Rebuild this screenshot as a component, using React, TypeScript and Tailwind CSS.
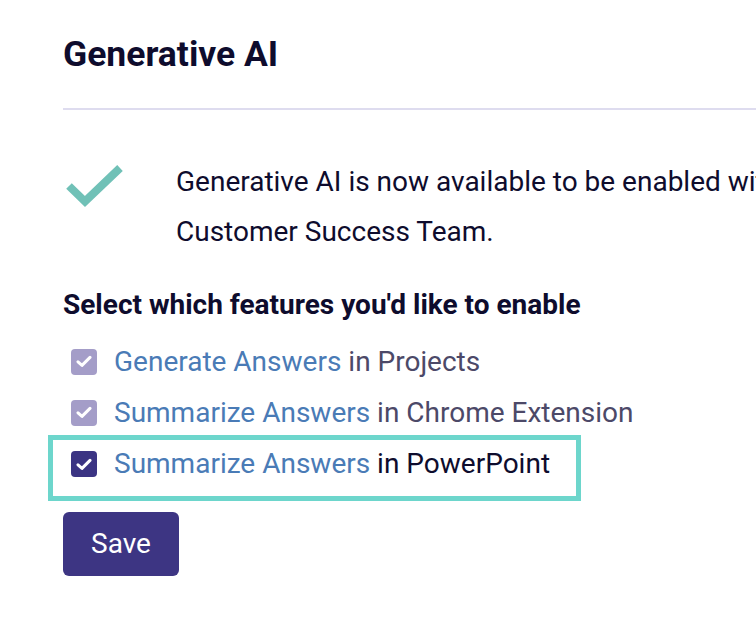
import React from "react";

function Check({ dark }: { dark?: boolean }) {
  return (
    <span
      className={
        "flex h-[26px] w-[26px] shrink-0 items-center justify-center rounded-[4px] " +
        (dark ? "bg-[#3b3483]" : "bg-[#a49dc8]")
      }
    >
      <svg width="16" height="13" viewBox="0 0 16 13" fill="none">
        <path d="M2 6.8 L6 10.4 L14 2.4" stroke="white" strokeWidth="3" strokeLinecap="round" strokeLinejoin="round" />
      </svg>
    </span>
  );
}

export default function App() {
  return (
    <div className="h-[626px] w-[756px] overflow-hidden bg-white font-['Roboto',sans-serif]">
      <div className="w-[1000px] pl-[63px] pt-[32px]">
        <h1 className="text-[35.5px] font-bold leading-[44px] text-[#0e0c2d]">Generative AI</h1>
        <div className="mt-[32px] h-[2px] bg-[#dedcef]" />
        <div className="mt-[47px] flex items-start gap-[49px]">
          <svg width="64" height="56" viewBox="0 0 64 56" className="mt-[2px] shrink-0" fill="none">
            <path d="M6 27 L22 42.5 L57 9" stroke="#70c1b7" strokeWidth="8" />
          </svg>
          <p className="whitespace-nowrap text-[28px] leading-[50px] text-[#0e0c2d]">
            Generative AI is now available to be enabled with the help of your
            <br />
            Customer Success Team.
          </p>
        </div>
        <h2 className="mt-[32px] whitespace-nowrap text-[28px] font-bold leading-[32px] text-[#0e0c2d]">
          Select which features you'd like to enable
        </h2>
        <div className="mt-[15px] flex flex-col">
          <div className="flex h-[51px] items-center gap-[17px] pl-[8px] text-[28px] whitespace-nowrap">
            <Check />
            <span>
              <span className="text-[#4a7bb6]">Generate Answers</span>
              <span className="text-[#4c4968]"> in Projects</span>
            </span>
          </div>
          <div className="flex h-[51px] items-center gap-[17px] pl-[8px] text-[28px] whitespace-nowrap">
            <Check />
            <span>
              <span className="text-[#4a7bb6]">Summarize Answers</span>
              <span className="text-[#4c4968]"> in Chrome Extension</span>
            </span>
          </div>
          <div className="-ml-[15px] -mt-[3px] w-[533px] border-[5px] border-[#6dd6cc] pb-[8px] pl-[18px]">
            <div className="flex h-[48px] items-center gap-[17px] text-[28px] whitespace-nowrap">
              <Check dark />
              <span>
                <span className="text-[#4a7bb6]">Summarize Answers</span>
                <span className="text-[#0e0c2d]"> in PowerPoint</span>
              </span>
            </div>
          </div>
        </div>
        <button className="mt-[11px] flex h-[64px] w-[116px] items-center justify-center rounded-[6px] bg-[#3d3583] text-[28px] text-white">
          Save
        </button>
      </div>
    </div>
  );
}
